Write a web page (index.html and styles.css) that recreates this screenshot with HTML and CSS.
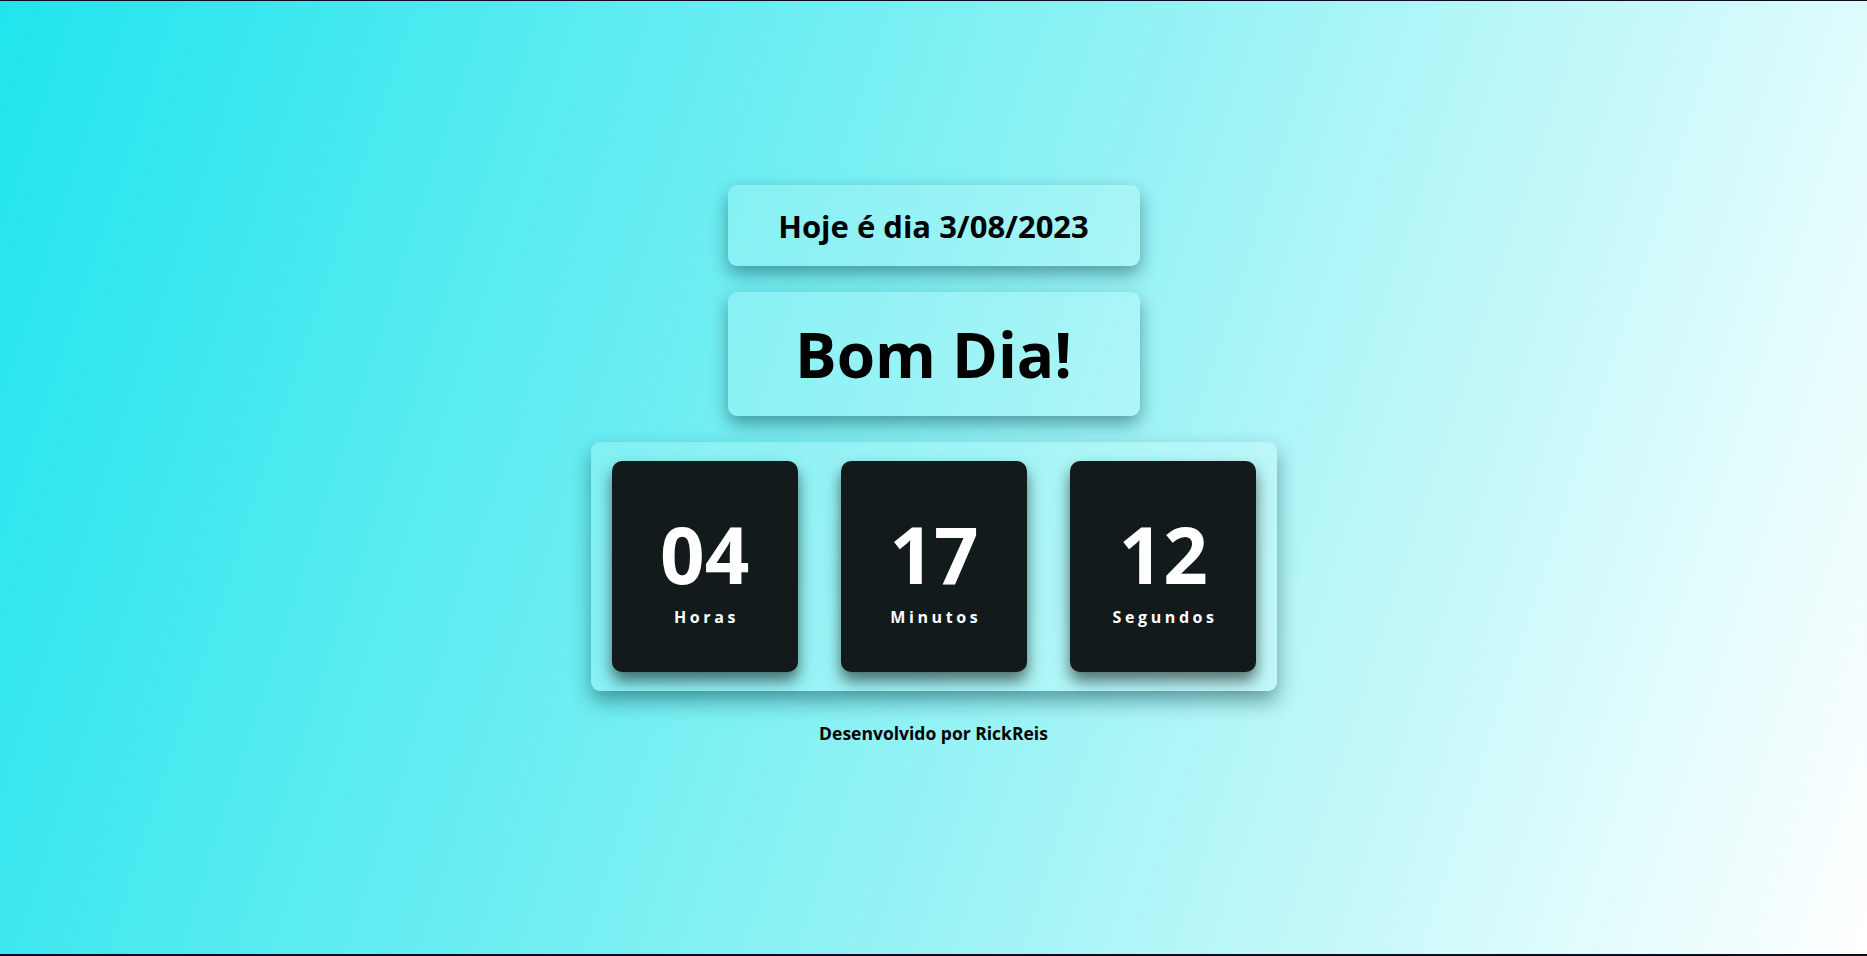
FILE: index.html
```html
<!DOCTYPE html>
<html lang="pt-BR">
<head>
<meta charset="utf-8">
<title>Relógio</title>
<link rel="stylesheet" href="styles.css">
</head>
<body>
<main class="page">
  <div class="box date-box">
    <h2 class="date-text">Hoje é dia 3/08/2023</h2>
  </div>
  <div class="box greeting-box">
    <h1 class="greeting-text">Bom Dia!</h1>
  </div>
  <div class="timer">
    <div class="card">
      <span class="num">04</span>
      <span class="label">Horas</span>
    </div>
    <div class="card">
      <span class="num">17</span>
      <span class="label">Minutos</span>
    </div>
    <div class="card">
      <span class="num">12</span>
      <span class="label">Segundos</span>
    </div>
  </div>
  <p class="footer">Desenvolvido por RickReis</p>
</main>
</body>
</html>
```
FILE: styles.css
```css
* { box-sizing: border-box; }
html, body { margin: 0; padding: 0; height: 100%; }
body {
  font-family: "Open Sans", "Noto Sans", sans-serif;
  color: #000;
  background: linear-gradient(108deg, #20e4ed 0%, #7ff0f3 45%, #ffffff 100%);
  border-top: 1px solid #0e0b1f;
  border-bottom: 2px solid #0e0b1f;
}
.page {
  height: 100%;
  display: flex;
  flex-direction: column;
  align-items: center;
  padding-top: 184px;
}
.box {
  width: 412px;
  background: rgba(255, 255, 255, 0.17);
  border-radius: 9px;
  box-shadow: 0 8px 18px rgba(0, 50, 60, 0.45);
  display: flex;
  align-items: center;
  justify-content: center;
}
.date-box { height: 81px; }
.greeting-box { height: 124px; margin-top: 26px; }
.date-text {
  margin: 0;
  font-size: 31px;
  font-weight: 700;
}
.greeting-text {
  margin: 0;
  font-size: 62px;
  font-weight: 700;
}
.timer {
  margin-top: 26px;
  width: 686px;
  height: 249px;
  padding: 19px 20px 19px 21px;
  display: flex;
  gap: 43px;
  background: rgba(255, 255, 255, 0.17);
  border-radius: 9px;
  box-shadow: 0 10px 20px rgba(0, 50, 60, 0.45);
}
.card {
  width: 187px;
  height: 211px;
  background: #121a1c;
  border-radius: 10px;
  box-shadow: 0 9px 15px rgba(0, 0, 0, 0.55);
  color: #fff;
  display: flex;
  flex-direction: column;
  align-items: center;
  justify-content: center;
  padding-top: 10px;
}
.num {
  font-size: 78px;
  font-weight: 700;
  line-height: 1;
}
.label {
  margin-top: 13px;
  font-size: 16px;
  font-weight: 700;
  letter-spacing: 3.6px;
  padding-left: 3.6px;
}
.footer {
  margin: 30px 0 0;
  font-size: 17.5px;
  font-weight: 700;
}
```
